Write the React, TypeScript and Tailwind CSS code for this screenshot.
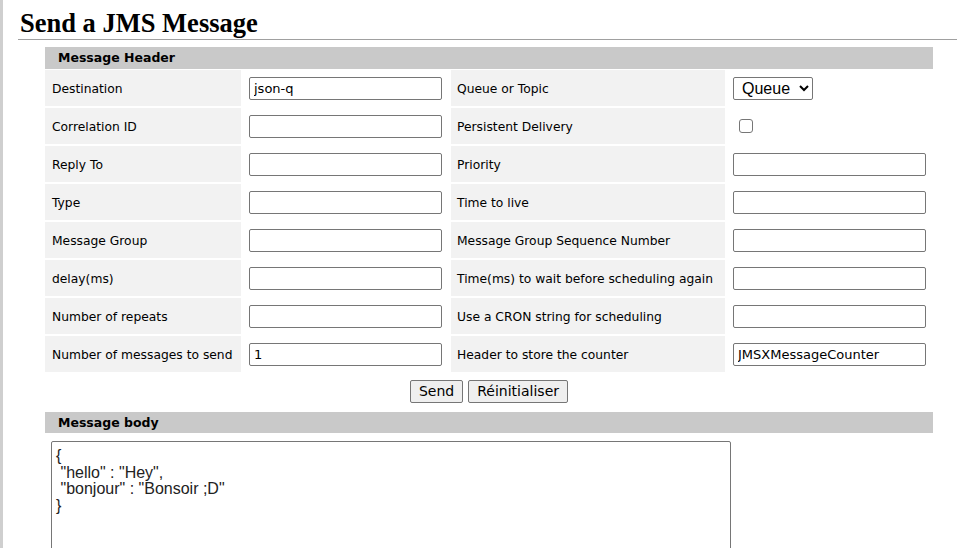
const rows: [string, string, string, string][] = [
  ["Destination", "json-q", "Queue or Topic", "select"],
  ["Correlation ID", "", "Persistent Delivery", "checkbox"],
  ["Reply To", "", "Priority", ""],
  ["Type", "", "Time to live", ""],
  ["Message Group", "", "Message Group Sequence Number", ""],
  ["delay(ms)", "", "Time(ms) to wait before scheduling again", ""],
  ["Number of repeats", "", "Use a CRON string for scheduling", ""],
  ["Number of messages to send", "1", "Header to store the counter", "JMSXMessageCounter"],
];

const verdana = "font-['DejaVu_Sans',Verdana,sans-serif]";

function TextBox({ value }: { value: string }) {
  return (
    <input
      type="text"
      defaultValue={value}
      className={`h-[23px] w-[193px] rounded-[2px] border border-[#767676] bg-white px-[4px] text-[13px] text-black outline-none ${verdana}`}
    />
  );
}

function Value({ kind }: { kind: string }) {
  if (kind === "select") {
    return (
      <select
        defaultValue="Queue"
        className="h-[23px] w-[80px] rounded-[2px] border border-[#767676] bg-white pl-[4px] text-[16px] text-black font-['Liberation_Sans',Arial,sans-serif]"
      >
        <option>Queue</option>
        <option>Topic</option>
      </select>
    );
  }
  if (kind === "checkbox") {
    return (
      <input type="checkbox" className="ml-[6px] h-[14px] w-[14px] appearance-none rounded-[3px] border border-[#767676] bg-white" />
    );
  }
  return <TextBox value={kind} />;
}

export default function App() {
  return (
    <div className={`h-[548px] overflow-hidden border-l-[3px] border-[#cfcfcf] bg-white ${verdana}`}>
      <h1 className="pl-[17px] pt-[9px] text-[26.5px] leading-[28px] font-bold text-black font-['Liberation_Serif',Georgia,serif]">
        Send a JMS Message
      </h1>
      <div className="ml-[15px] mt-[2px] h-px bg-[#a0a0a0]" />

      <div className="ml-[42px] mt-[7px] w-[888px]">
        <div className="h-[22px] bg-[#c9c9c9] pl-[13px] text-[12.5px] leading-[22px] font-bold text-black">Message Header</div>
        <div className="mt-[1px] grid grid-cols-[196px_206px_274px_206px] gap-[2px] text-[12.3px] text-black">
          {rows.map(([l1, v1, l2, v2]) => (
            <div key={l1} className="contents">
              <div className="flex h-[36px] items-center whitespace-nowrap bg-[#f2f2f2] pl-[7px] pt-[2px]">{l1}</div>
              <div className="flex h-[36px] items-center pl-[6px]">
                <TextBox value={v1} />
              </div>
              <div className="flex h-[36px] items-center whitespace-nowrap bg-[#f2f2f2] pl-[6px] pt-[2px]">{l2}</div>
              <div className="flex h-[36px] items-center pl-[6px]">
                <Value kind={v2} />
              </div>
            </div>
          ))}
        </div>

        <div className="mt-[8px] flex justify-center gap-[5px]">
          <button className="h-[23px] rounded-[2px] border border-[#767676] bg-[#efefef] px-[8px] text-[14px] text-black">Send</button>
          <button className="h-[23px] rounded-[2px] border border-[#767676] bg-[#efefef] px-[8px] text-[14px] text-black">Réinitialiser</button>
        </div>

        <div className="mt-[9px] h-[21px] bg-[#c9c9c9] pl-[13px] text-[12.5px] leading-[21px] font-bold text-black">Message body</div>
        <textarea
          defaultValue={'{\n "hello" : "Hey",\n "bonjour" : "Bonsoir ;D"\n}'}
          className="ml-[6px] mt-[8px] block h-[140px] w-[680px] resize-none rounded-[2px] border border-[#767676] px-[4px] pt-[6px] text-[16px] leading-[16.5px] text-[#222] outline-none font-['Liberation_Sans',Arial,sans-serif]"
        />
      </div>
    </div>
  );
}
